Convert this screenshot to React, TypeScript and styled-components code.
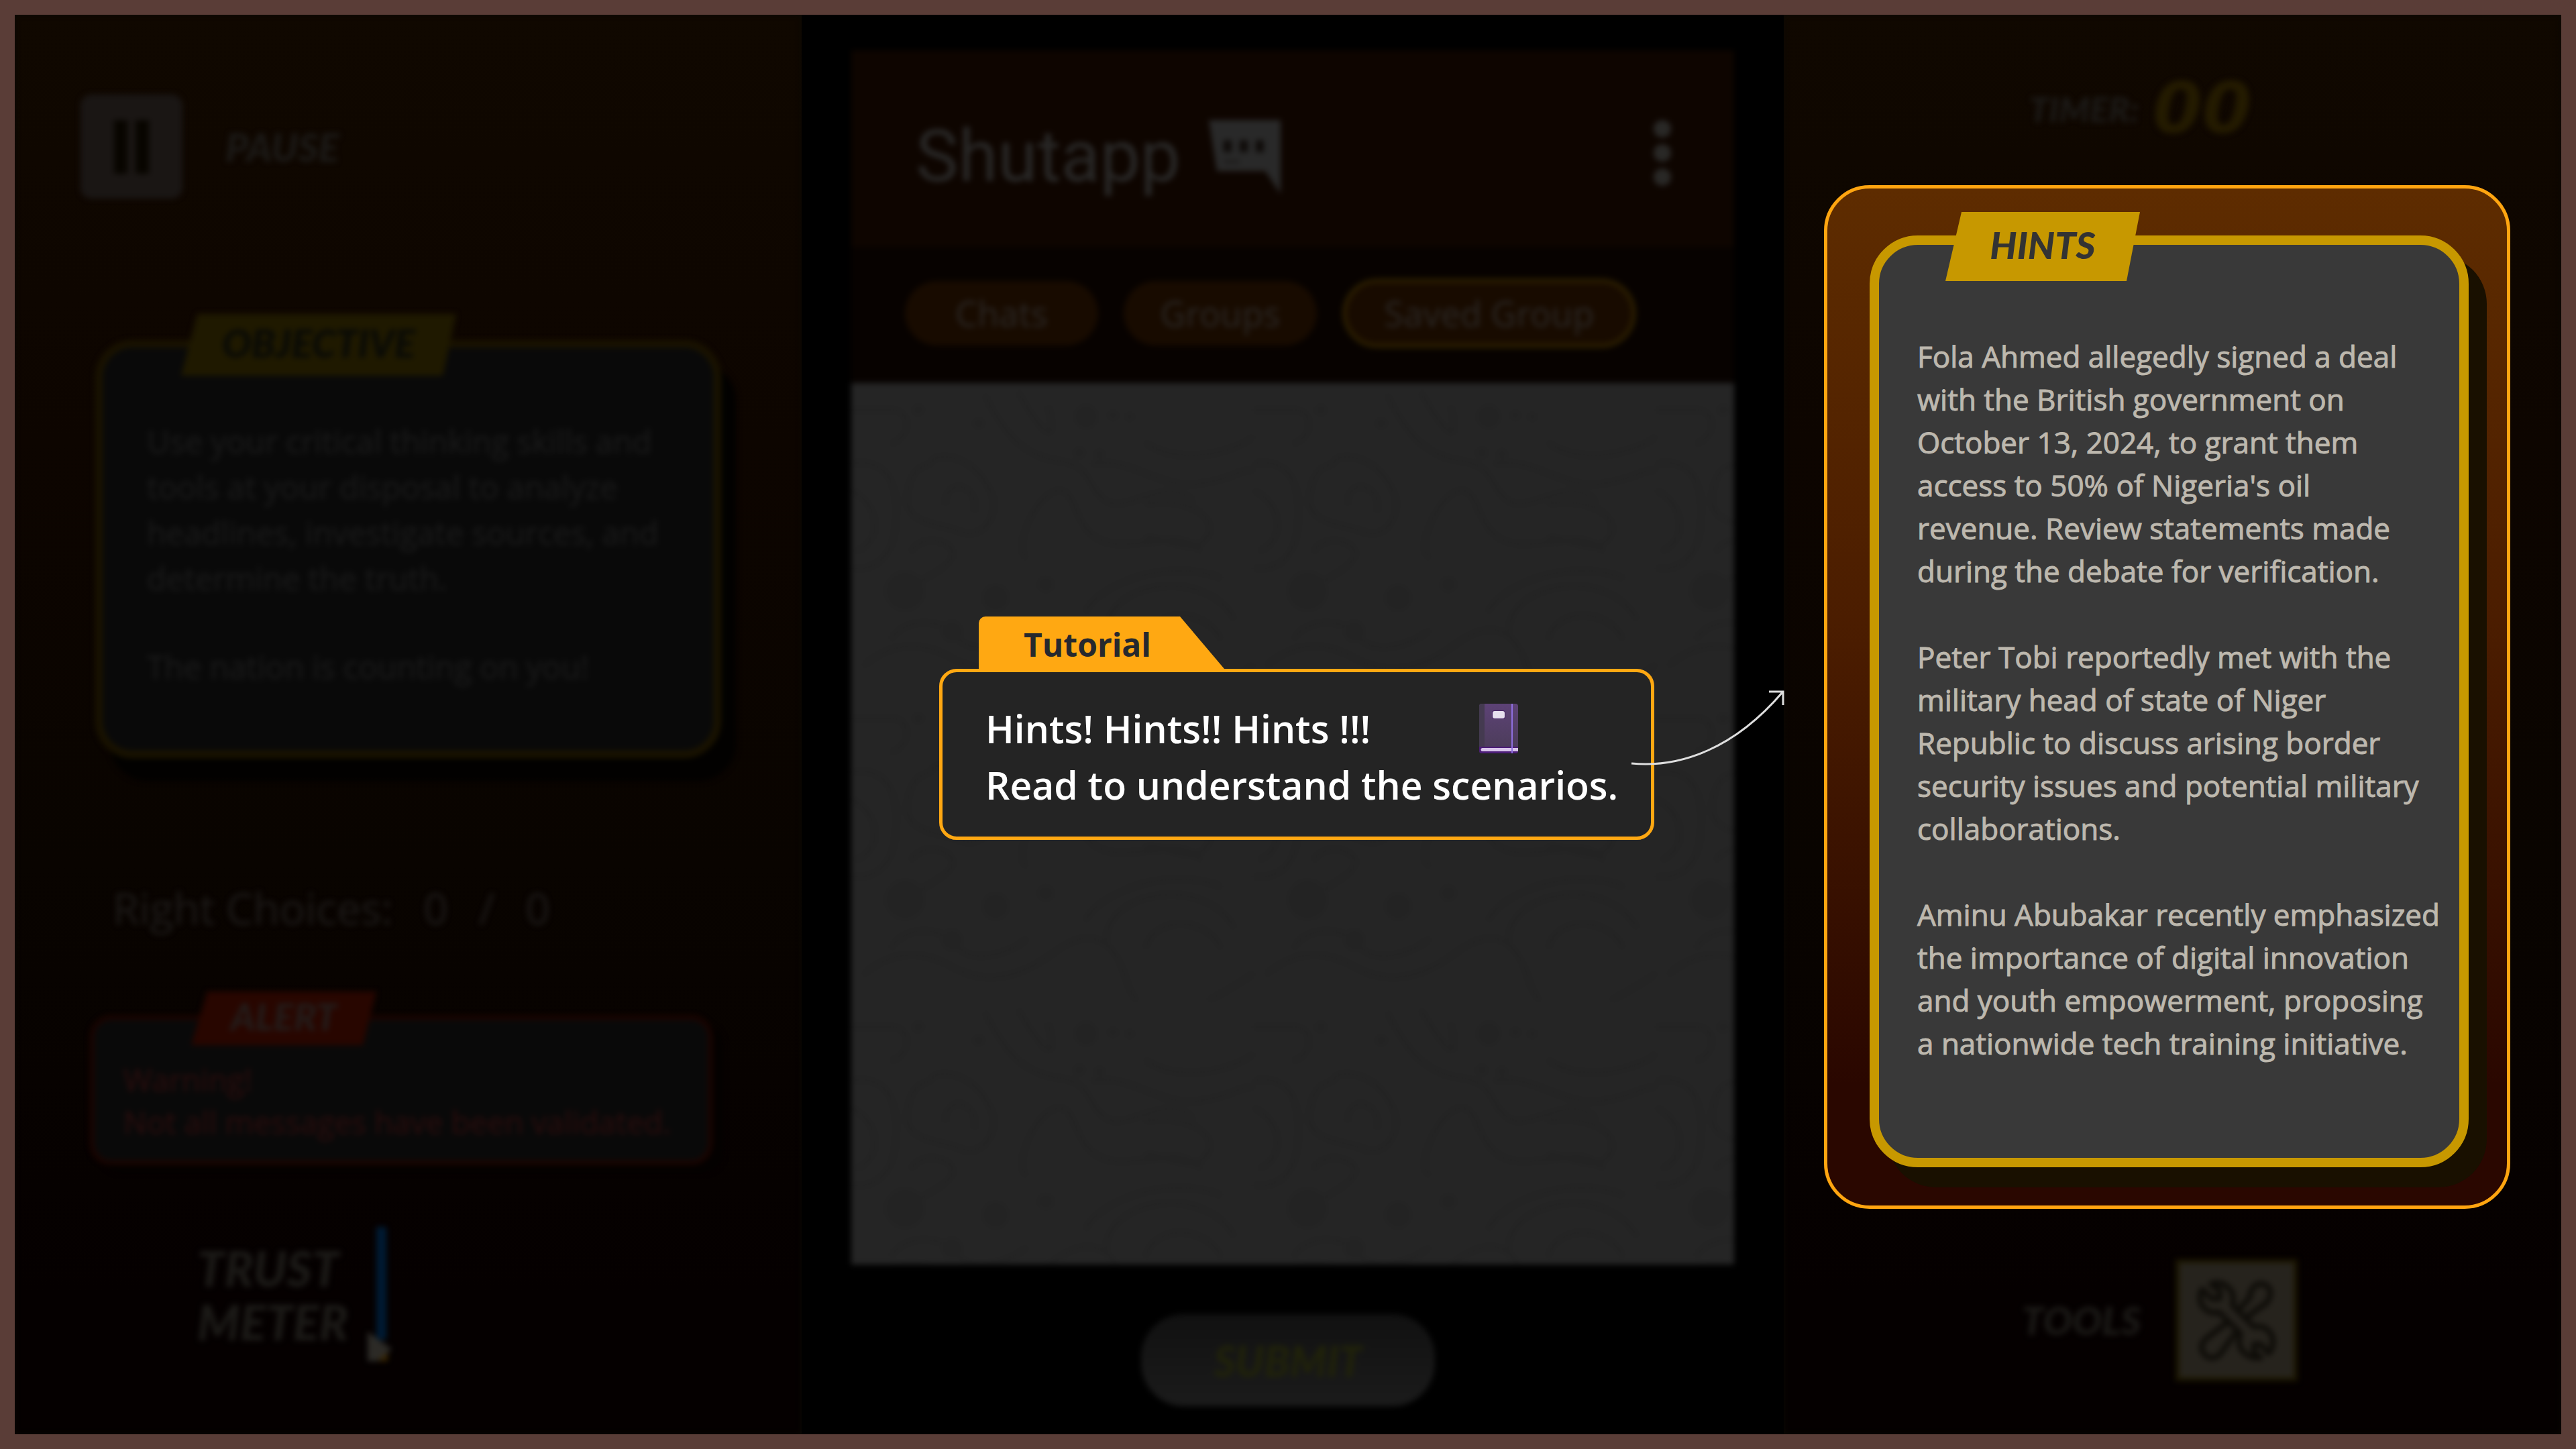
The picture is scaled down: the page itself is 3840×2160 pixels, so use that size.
import React from "react";
import styled, { createGlobalStyle, css } from "styled-components";

const hand = '"Open Sans", "Noto Sans", sans-serif';
const display = 'Lato, "Liberation Sans", sans-serif';

const GlobalStyle = createGlobalStyle`
  *, *::before, *::after { box-sizing: border-box; }
  body { margin: 0; background: #5a3d37; }
  p, h1, h2, h3 { margin: 0; }
  button { border: 0; padding: 0; cursor: pointer; }
`;

const dimmed = css`
  filter: blur(4px);
`;

const displayText = css`
  font-family: ${display};
  font-weight: 900;
  font-style: italic;
`;

const Frame = styled.main`
  min-height: 100vh;
  border: 22px solid #5a3d37;
  background: #000;
  display: grid;
  grid-template-columns: 1173fr 1464fr 1159fr;
`;

const SidePanel = styled.section`
  display: flex;
  flex-direction: column;
  background: linear-gradient(180deg, #100800 0%, #0d0500 30%, #090400 60%, #050000 90%);
  box-shadow: inset 0 0 8px #0c0a04;
`;

/* ---------- left panel ---------- */

const PauseRow = styled.div`
  ${dimmed}
  display: flex;
  align-items: center;
  gap: 64px;
  padding: 119px 0 0 98px;
`;

const PauseButton = styled.button`
  width: 152px;
  height: 155px;
  border-radius: 16px;
  background: #1a1614;
  display: flex;
  align-items: center;
  justify-content: center;
  gap: 12px;
`;

const PauseBar = styled.span`
  width: 20px;
  height: 80px;
  background: #080500;
`;

const Label = styled.h2<{ $size: number; $width?: number }>`
  ${displayText}
  font-size: ${(p) => p.$size}px;
  line-height: 80px;
  width: ${(p) => (p.$width ? `${p.$width}px` : "auto")};
  color: #1c1a17;
  white-space: nowrap;
`;

const Card = styled.section<{ $tone: "gold" | "red" }>`
  ${dimmed}
  position: relative;
  background: #090909;
  ${(p) =>
    p.$tone === "gold"
      ? css`
          margin: 211px 120px 0 120px;
          padding: 106px 0 91px 66px;
          border: 11px solid #1a1300;
          border-radius: 56px;
          box-shadow: 22px 34px 0 #020100;
        `
      : css`
          margin: 120px 133px 0 112px;
          padding: 58px 0 26px 44px;
          border: 6px solid #1e0400;
          border-radius: 32px;
          box-shadow: 16px 12px 0 #040100;
        `}
`;

const Tag = styled.h2<{ $top: number; $left: number; $width: number; $height: number; $size: number; $bg: string; $color: string }>`
  ${displayText}
  position: absolute;
  top: ${(p) => p.$top}px;
  left: ${(p) => p.$left}px;
  width: ${(p) => p.$width}px;
  padding-bottom: 6px;
  line-height: ${(p) => p.$height - 6}px;
  font-size: ${(p) => p.$size}px;
  color: ${(p) => p.$color};
  background: ${(p) => p.$bg};
  clip-path: polygon(24px 0, 100% 0, calc(100% - 20px) 100%, 0 100%);
  text-align: center;
`;

const Copy = styled.p<{ $size: number; $line: number; $color: string }>`
  font-family: ${hand};
  font-size: ${(p) => p.$size}px;
  line-height: ${(p) => p.$line}px;
  color: ${(p) => p.$color};
  -webkit-text-stroke: 1px ${(p) => p.$color};
  white-space: nowrap;
  & + & { margin-top: ${(p) => p.$line}px; }
`;

const Choices = styled.p`
  ${dimmed}
  display: flex;
  gap: 46px;
  margin: 184px 0 0 146px;
  font-family: ${hand};
  font-size: 64px;
  line-height: 80px;
  color: #1d1a18;
`;

const TrustRow = styled.div`
  ${dimmed}
  display: flex;
  align-items: center;
  gap: 18px;
  margin: 93px 0 0 272px;
`;

/* ---------- phone ---------- */

const Stage = styled.section`
  position: relative;
  display: flex;
  flex-direction: column;
`;

const Phone = styled.div`
  ${dimmed}
  margin: 53px 74px 0;
  display: flex;
  flex-direction: column;
`;

const PhoneHeader = styled.header`
  display: flex;
  align-items: center;
  height: 293px;
  padding: 24px 94px 0 96px;
  background: #0e0500;
`;

const AppName = styled.h1`
  font: 400 107px/120px Roboto, sans-serif;
  color: #282726;
  margin-right: 42px;
`;

const MenuButton = styled.button`
  margin: 0 0 12px auto;
  background: none;
  display: grid;
  gap: 10px;
  span { width: 26px; height: 26px; border-radius: 50%; background: #292826; }
`;

const Tabs = styled.nav`
  display: flex;
  align-items: center;
  gap: 38px;
  height: 203px;
  padding: 0 0 6px 80px;
  background: #070200;
`;

const Tab = styled.button<{ $active?: boolean }>`
  font: 400 52px/70px "Noto Sans", sans-serif;
  color: #292522;
  background: #180b00;
  border-radius: 52px;
  width: ${(p) => (p.$active ? 438 : 288)}px;
  height: ${(p) => (p.$active ? 104 : 96)}px;
  border: ${(p) => (p.$active ? "7px solid #2a1d00" : "0")};
`;

const Chat = styled.div`
  height: 1314px;
  background: #252525;
`;

const Footer = styled.div`
  ${dimmed}
  display: flex;
  justify-content: center;
  padding: 74px 14px 0 0;
`;

const Submit = styled.button`
  ${displayText}
  width: 438px;
  height: 137px;
  border-radius: 64px;
  background: linear-gradient(180deg, #111 0%, #1b1b1b 100%);
  color: #20220a;
  font-size: 62px;
`;

/* ---------- tutorial callout ---------- */

const Tutorial = styled.aside`
  position: absolute;
  top: 897px;
  left: 205px;
  width: 1066px;
`;

const TutorialTab = styled.h2`
  width: 366px;
  margin-left: 59px;
  padding: 6px 0 0 67px;
  font: 700 48px/72px ${hand};
  color: #26292e;
  background: #ffa812;
  border-top-left-radius: 10px;
  clip-path: polygon(0 0, 300px 0, 100% 100%, 0 100%);
`;

const TutorialBox = styled.div`
  border: 5px solid #ffa812;
  border-radius: 26px;
  padding: 42px 0 35px 64px;
  background: #242424;
`;

const TutorialText = styled.p`
  display: flex;
  align-items: center;
  gap: 162px;
  font: 600 57px/84px ${hand};
  color: #fff;
  white-space: nowrap;
`;

const Arrow = styled.svg`
  position: absolute;
  left: 1026px;
  top: 104px;
`;

/* ---------- right panel ---------- */

const TimerRow = styled.div`
  ${dimmed}
  display: flex;
  align-items: center;
  gap: 20px;
  height: 254px;
  padding: 26px 0 0 366px;
`;

const TimerValue = styled.output`
  font: italic 700 106px/120px "DejaVu Sans", sans-serif;
  color: #241b00;
`;

const Hints = styled.section`
  margin: 0 76px 0 60px;
  padding: 70px 57px 57px 63px;
  border: 5px solid #ffa510;
  border-radius: 68px;
  background: linear-gradient(180deg, #5e2c00 0%, #4a1c00 45%, #2a0700 88%);
`;

const HintsCard = styled.div`
  position: relative;
  padding: 134px 0 139px 57px;
  border: 14px solid #c79800;
  border-radius: 72px;
  background: #393939;
  box-shadow: 27px 30px 0 #191000;
`;

const ToolsRow = styled.div`
  ${dimmed}
  display: flex;
  align-items: center;
  gap: 50px;
  padding: 75px 0 0 355px;
`;

const ToolsButton = styled.button`
  width: 182px;
  height: 182px;
  border: 6px solid #1c1600;
  background: #26231d;
  display: grid;
  place-items: center;
`;

const ChatIcon = () => (
  <svg width="107" height="110" viewBox="0 0 107 110" aria-hidden="true">
    <path d="M0 0H107V110L84 76H12Z" fill="#292929" />
    <path d="M22 30h12v18h-12zM46 30h12v18h-12zM70 30h12v18h-12z" fill="#0e0a08" />
    <path d="M22 62h24" stroke="#1c1a19" strokeWidth="5" />
  </svg>
);

const ChatPattern = () => (
  <svg width="100%" height="100%" aria-hidden="true">
    <defs>
      <pattern id="waves" width="600" height="460" patternUnits="userSpaceOnUse">
        <g fill="none" stroke="#222222" strokeWidth="6" strokeLinecap="round">
          <path d="M0 40h60c30 0 30 40 0 50M0 120c60-10 70 40 66 90s-30 70-66 66M0 160c40 20 50 70 10 90" />
          <path d="M124 112c40-10 70 20 84 50s-10 74-44 60-90-10-80-60 30-30 40-50M140 180c0-40 50-30 44 10M90 250c20-30 70-10 60 10s-60 40-90 60" />
          <path d="M200 20c30 60 60 90 110 96s40 40 70 60 90-40 130 0M250 16c30 50 60 90 44 20M260 260c-20-20 20-100 50-100s20 80 90 80 90-20 120 10" />
          <path d="M360 120c60-10 100 40 160 30s50-20 80-20M440 90c40 30 120 20 160-10M440 180c60-10 110 20 90 50s-60 0-90 0" />
          <path d="M350 340c20-40 120-80 200-50M380 370c0-70 140-100 190-20M440 380c10-40 80-50 110 0" />
          <path d="M20 420q60-50 130-10t150-20 110 40 190-10M60 380c30-40 90-20 100 0s60 20 100-10" />
        </g>
        <g fill="#232323">
          <circle cx="100" cy="40" r="9" /><circle cx="190" cy="60" r="9" /><circle cx="350" cy="50" r="18" />
          <circle cx="390" cy="48" r="8" /><circle cx="415" cy="50" r="7" /><circle cx="340" cy="104" r="9" />
          <circle cx="370" cy="106" r="8" /><circle cx="80" cy="310" r="30" /><circle cx="215" cy="320" r="20" />
          <circle cx="150" cy="370" r="16" /><circle cx="290" cy="300" r="12" />
        </g>
      </pattern>
    </defs>
    <rect width="100%" height="100%" fill="url(#waves)" />
  </svg>
);

const BookIcon = () => (
  <svg width="58" height="74" viewBox="0 0 58 74" aria-hidden="true">
    <defs>
      <linearGradient id="cover" x1="0" y1="0" x2="0" y2="1">
        <stop offset="0" stopColor="#5d4276" />
        <stop offset="1" stopColor="#4a3c57" />
      </linearGradient>
    </defs>
    <rect width="58" height="74" rx="4" fill="url(#cover)" />
    <path d="M4 0h4v64H0V4a4 4 0 0 1 4-4Z" fill="#443a50" />
    <path d="M0 64h58v6a4 4 0 0 1-4 4H4a4 4 0 0 1-4-4Z" fill="#4c1d78" />
    <path d="M5 66h53v5H5a2 2 0 0 1 0-5Z" fill="#d8c4ea" />
    <rect x="19" y="10" width="20" height="13" rx="4" fill="#452064" />
    <rect x="20" y="11" width="18" height="11" rx="3" fill="#e6e0ee" />
    <path d="M49 0v74" stroke="#8f6fe0" strokeWidth="2" />
  </svg>
);

const MeterIcon = () => (
  <svg width="36" height="201" viewBox="0 0 36 201" aria-hidden="true">
    <rect x="13" width="15" height="168" fill="#001a33" />
    <path d="M18 180h12v20H16z" fill="#3a2600" />
    <path d="M0 156 36 182 14 200H0Z" fill="#2c2a26" />
  </svg>
);

const ToolsIcon = () => (
  <svg width="116" height="120" viewBox="0 0 116 120" fill="#26231d" stroke="#0e0c08" strokeWidth="8" strokeLinejoin="round" aria-hidden="true">
    <path d="M84 10c8-8 22-4 24 6s-4 20-14 24L70 58 58 48 78 26c0-6 2-12 6-16Z" />
    <path d="M46 62 60 74 34 110c-6 8-18 8-24 1s-5-17 2-23Z" />
    <path d="M20 6c16-6 34 6 33 24l-1 8 32 32c16-4 30 8 28 26-1 6-3 10-6 13L94 96H84v12l10 8c-18 2-34-10-32-28l2-8-32-32C16 52 2 40 4 24c0-4 1-7 3-10l14 14h12V16Z" />
  </svg>
);

export default function App() {
  return (
    <>
      <GlobalStyle />
      <Frame>
        <SidePanel>
          <PauseRow>
            <PauseButton aria-label="Pause">
              <PauseBar />
              <PauseBar />
            </PauseButton>
            <Label $size={58}>PAUSE</Label>
          </PauseRow>

          <Card $tone="gold">
            <Tag $top={-50} $left={117} $width={410} $height={92} $size={58} $bg="#1f1900" $color="#090a06">
              OBJECTIVE
            </Tag>
            <Copy $size={47} $line={68} $color="#181818">
              Use your critical thinking skills and<br />
              tools at your disposal to analyze<br />
              headlines, investigate sources, and<br />
              determine the truth.
            </Copy>
            <Copy $size={47} $line={68} $color="#181818">The nation is counting on you!</Copy>
          </Card>

          <Choices>
            <span>Right Choices:</span>
            <span>0</span>
            <span>/</span>
            <span>0</span>
          </Choices>

          <Card $tone="red">
            <Tag $top={-42} $left={145} $width={276} $height={80} $size={56} $bg="#280600" $color="#231c1a">
              ALERT
            </Tag>
            <Copy $size={46} $line={63} $color="#260d0d">
              Warning!<br />
              Not all messages have been validated.
            </Copy>
          </Card>

          <TrustRow>
            <Label $size={72} $width={236}>TRUST<br />METER</Label>
            <MeterIcon />
          </TrustRow>
        </SidePanel>

        <Stage>
          <Phone>
            <PhoneHeader>
              <AppName>Shutapp</AppName>
              <ChatIcon />
              <MenuButton aria-label="Menu">
                <span />
                <span />
                <span />
              </MenuButton>
            </PhoneHeader>
            <Tabs>
              <Tab>Chats</Tab>
              <Tab>Groups</Tab>
              <Tab $active>Saved Group</Tab>
            </Tabs>
            <Chat>
              <ChatPattern />
            </Chat>
          </Phone>
          <Footer>
            <Submit>SUBMIT</Submit>
          </Footer>

          <Tutorial>
            <TutorialTab>Tutorial</TutorialTab>
            <TutorialBox>
              <TutorialText>
                Hints! Hints!! Hints !!!
                <BookIcon />
              </TutorialText>
              <TutorialText>Read to understand the scenarios.</TutorialText>
            </TutorialBox>
            <Arrow width="240" height="124" viewBox="0 0 240 124" fill="none" stroke="#dedede" strokeWidth="3" aria-hidden="true">
              <path d="M6 115C80 122 160 92 231 9M211 8h21v20" />
            </Arrow>
          </Tutorial>
        </Stage>

        <SidePanel>
          <TimerRow>
            <Label $size={52} $width={164}>TIMER:</Label>
            <TimerValue>00</TimerValue>
          </TimerRow>

          <Hints>
            <HintsCard>
              <Tag $top={-49} $left={99} $width={290} $height={103} $size={56} $bg="#c79800" $color="#333333">
                HINTS
              </Tag>
              <Copy $size={44} $line={64} $color="#bdb8ae">
                Fola Ahmed allegedly signed a deal<br />
                with the British government on<br />
                October 13, 2024, to grant them<br />
                access to 50% of Nigeria's oil<br />
                revenue. Review statements made<br />
                during the debate for verification.
              </Copy>
              <Copy $size={44} $line={64} $color="#bdb8ae">
                Peter Tobi reportedly met with the<br />
                military head of state of Niger<br />
                Republic to discuss arising border<br />
                security issues and potential military<br />
                collaborations.
              </Copy>
              <Copy $size={44} $line={64} $color="#bdb8ae">
                Aminu Abubakar recently emphasized<br />
                the importance of digital innovation<br />
                and youth empowerment, proposing<br />
                a nationwide tech training initiative.
              </Copy>
            </HintsCard>
          </Hints>

          <ToolsRow>
            <Label $size={58} $width={179}>TOOLS</Label>
            <ToolsButton aria-label="Tools">
              <ToolsIcon />
            </ToolsButton>
          </ToolsRow>
        </SidePanel>
      </Frame>
    </>
  );
}
